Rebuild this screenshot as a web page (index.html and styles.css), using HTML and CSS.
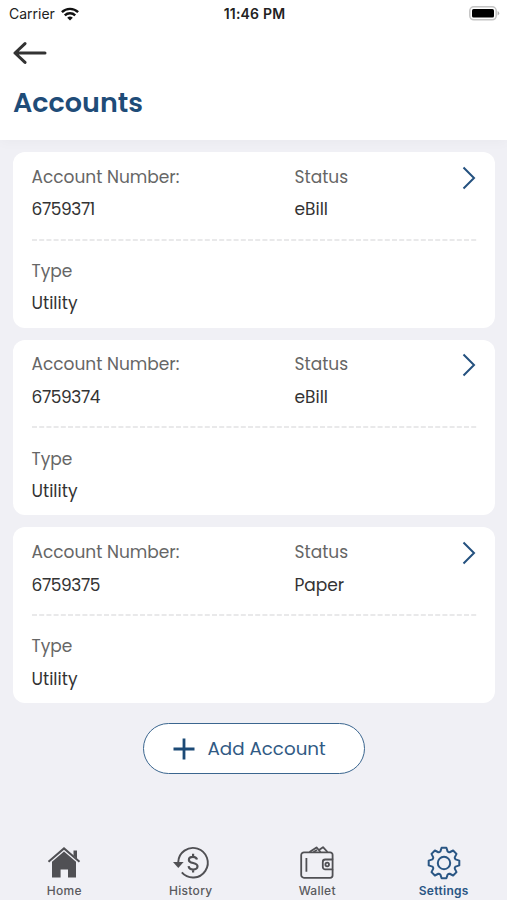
FILE: index.html
```html
<!DOCTYPE html>
<html lang="en">
<head>
<meta charset="utf-8">
<title>Accounts</title>
<link rel="stylesheet" href="styles.css">
</head>
<body>
<div class="screen">
  <header class="header">
    <div class="status-bar">
      <div class="carrier"><span>Carrier</span>
        <svg width="18" height="14" viewBox="0 0 18 14" fill="none" stroke="#111" stroke-width="2.4"><path d="M.9 5.2a11.6 11.6 0 0 1 16.2 0M3.8 8.4a7.4 7.4 0 0 1 10.4 0"/><path d="M9 13.6 6.2 10.8a4 4 0 0 1 5.6 0z" fill="#111" stroke="none"/></svg>
      </div>
      <span class="clock">11:46 PM</span>
      <svg class="battery" width="31" height="15" viewBox="0 0 31 15"><rect x=".8" y=".8" width="26.4" height="13" rx="4" fill="#fff" stroke="#c4c4c4" stroke-width="1.5"/><rect x="3" y="3" width="22" height="8.6" rx="1.6" fill="#000"/><path d="M28.6 5v4.6q1.6-.8 1.6-2.3t-1.6-2.3z" fill="#b0b0b0"/></svg>
    </div>
    <svg class="back" width="34" height="24" viewBox="0 0 34 24" fill="none" stroke="#333" stroke-width="3" stroke-linecap="round" stroke-linejoin="round"><path d="M32 12H2M12 2.6 2 12l10 9.4"/></svg>
    <h1 class="title">Accounts</h1>
  </header>
  <main class="content">
    <section class="card">
      <div class="row">
        <div class="field"><div class="label">Account Number:</div><div class="value number">6759371</div></div>
        <div class="field"><div class="label">Status</div><div class="value">eBill</div></div>
        <svg class="chevron" width="14" height="24" viewBox="0 0 14 24"><path d="M1.5 1.5 12 12 1.5 22.5"/></svg>
      </div>
      <svg class="divider" width="445" height="2"><path d="M0 1H445"/></svg>
      <div class="field"><div class="label">Type</div><div class="value">Utility</div></div>
    </section>
    <section class="card">
      <div class="row">
        <div class="field"><div class="label">Account Number:</div><div class="value number">6759374</div></div>
        <div class="field"><div class="label">Status</div><div class="value">eBill</div></div>
        <svg class="chevron" width="14" height="24" viewBox="0 0 14 24"><path d="M1.5 1.5 12 12 1.5 22.5"/></svg>
      </div>
      <svg class="divider" width="445" height="2"><path d="M0 1H445"/></svg>
      <div class="field"><div class="label">Type</div><div class="value">Utility</div></div>
    </section>
    <section class="card">
      <div class="row">
        <div class="field"><div class="label">Account Number:</div><div class="value number">6759375</div></div>
        <div class="field"><div class="label">Status</div><div class="value">Paper</div></div>
        <svg class="chevron" width="14" height="24" viewBox="0 0 14 24"><path d="M1.5 1.5 12 12 1.5 22.5"/></svg>
      </div>
      <svg class="divider" width="445" height="2"><path d="M0 1H445"/></svg>
      <div class="field"><div class="label">Type</div><div class="value">Utility</div></div>
    </section>
    <button class="add">
      <svg width="22" height="22" viewBox="0 0 22 22"><path d="M11 .5v21M.5 11h21" stroke="#1c4a76" stroke-width="2.8"/></svg>
      <span>Add Account</span>
    </button>
  </main>
  <nav class="tabs">
    <a class="tab">
      <svg width="36" height="36" viewBox="-18 -18 36 36"><path d="M-15.5-1.2 0-14.6 15.5-1.2" fill="none" stroke="#505054" stroke-width="2"/><path d="M9.5-12.4H13v8.2L9.5-7.4z M0-11.6 12-1.2V14.6H4V6.4H-3.4V14.6H-12V-1.2z" fill="#505054"/></svg>
      <span>Home</span>
    </a>
    <a class="tab">
      <svg width="40" height="36" viewBox="-20 -18 40 36" fill="none" stroke="#505054" stroke-width="1.9"><path d="M-12.8-.8A14.8 14.8 0 1 1-9.2 9.4"/><path d="M-18-1H-7.4L-12.7 5z" fill="#505054" stroke="none"/><path d="M6-3.5C5.5-5.5 4-6.2 2-6.2-.4-6.2-2.1-5.1-2.1-3.1-2.1 1.2 6.5-1.2 6.5 3.3 6.5 5.4 4.7 6.6 2.2 6.6-.3 6.6-2.1 5.5-2.4 3.2M2.1-9.2v3M2.1 6.6v3" stroke-width="2.2"/></svg>
      <span>History</span>
    </a>
    <a class="tab">
      <svg width="36" height="36" viewBox="-18 -18 36 36" fill="none" stroke="#505054" stroke-width="1.8" stroke-linejoin="round"><path d="M15.6-3.5V-8.2a2.5 2.5 0 0 0-2.5-2.5H-13a2.8 2.8 0 0 0-2.8 2.8V12a2.8 2.8 0 0 0 2.8 2.8H13.1A2.5 2.5 0 0 0 15.6 12.3V6.4"/><path d="M15.6-3.5H8.2a2.4 2.4 0 0 0-2.4 2.4V4a2.4 2.4 0 0 0 2.4 2.4h7.4z"/><circle cx="10.2" cy="1.5" r="1.8"/><path d="M-10.6-5V8.8M-7.5-11-.5-15.6 3.5-11M-3.5-11 0-13M2-13 6-15.8 10.5-11"/></svg>
      <span>Wallet</span>
    </a>
    <a class="tab active">
      <svg width="36" height="36" viewBox="-18 -18 36 36" fill="none" stroke="#2a5684" stroke-width="2" stroke-linejoin="round"><path d="M-3.6-11.6-2.4-15.3H2.4L3.6-11.6Q4.6-10.5 5.66-10.75L9.12-12.5 12.5-9.12 10.75-5.66Q10.5-4.6 11.6-3.6L15.3-2.4V2.4L11.6 3.6Q10.5 4.6 10.75 5.66L12.5 9.12 9.12 12.5 5.66 10.75Q4.6 10.5 3.6 11.6L2.4 15.3H-2.4L-3.6 11.6Q-4.6 10.5-5.66 10.75L-9.12 12.5-12.5 9.12-10.75 5.66Q-10.5 4.6-11.6 3.6L-15.3 2.4V-2.4L-11.6-3.6Q-10.5-4.6-10.75-5.66L-12.5-9.12-9.12-12.5-5.66-10.75Q-4.6-10.5-3.6-11.6z"/><circle r="6.2"/></svg>
      <span>Settings</span>
    </a>
  </nav>
</div>
</body>
</html>
```

FILE: styles.css
```css
* { box-sizing: border-box; }

body {
  margin: 0;
  font-family: Poppins, Inter, "Liberation Sans", sans-serif;
  background: #f0f0f5;
}

svg { display: block; flex: none; }

.screen {
  height: 900px;
  display: flex;
  flex-direction: column;
  overflow: hidden;
}

.header {
  height: 140px;
  background: #fff;
  box-shadow: 0 2px 12px rgba(0, 0, 0, .03);
}

.status-bar {
  height: 28px;
  padding: 0 7px 2px 9px;
  display: grid;
  grid-template-columns: 1fr auto 1fr;
  align-items: center;
  font-family: Inter, "Liberation Sans", sans-serif;
  line-height: 20px;
  color: #222;
}

.carrier { display: flex; align-items: center; gap: 6px; font-size: 14px; padding-top: 1px; }
.clock { font-size: 14px; font-weight: 600; letter-spacing: .2px; padding-top: 1px; }
.battery { justify-self: end; }
.back { margin: 13px 0 0 13px; }

.title {
  margin: 20px 0 0 13px;
  font-size: 27px;
  line-height: 36px;
  font-weight: 600;
  color: #1f4c78;
}

.content {
  flex: 1;
  padding: 12px 12px 0 13px;
  display: flex;
  flex-direction: column;
  gap: 12px;
}

.card {
  height: 175.7px;
  padding: 8.8px 19px 0 18.5px;
  background: #fff;
  border-radius: 12px;
}

.row { display: grid; grid-template-columns: 263px 1fr auto; }

.label, .value {
  font-size: 17px;
  line-height: 32.6px;
  white-space: nowrap;
}

.label { color: #666; }
.value { color: #333; }
.number { letter-spacing: -.4px; }
.chevron { margin-top: 4.8px; fill: none; stroke: #24517f; stroke-width: 2; }
.divider { margin: 12.6px 0 14.3px; stroke: #e2e2e4; stroke-width: 1.5; stroke-dasharray: 5 2.2; }

.add {
  align-self: center;
  margin-top: 8px;
  width: 222px;
  height: 51px;
  padding: 0 0 0 29px;
  display: flex;
  align-items: center;
  gap: 12.5px;
  border: 1.5px solid #3b668f;
  border-radius: 26px;
  background: #fff;
  font: inherit;
  font-size: 18.3px;
  color: #315a84;
  white-space: nowrap;
}

.tabs {
  height: 55px;
  padding-left: 1px;
  display: grid;
  grid-template-columns: repeat(4, 126.5px);
}

.tab {
  display: flex;
  flex-direction: column;
  align-items: center;
  font-family: Inter, "Liberation Sans", sans-serif;
  font-size: 12px;
  line-height: 20px;
  font-weight: 500;
  letter-spacing: .3px;
  color: #5a5a5e;
}

.tab.active { color: #2a5684; font-weight: 600; }
```
